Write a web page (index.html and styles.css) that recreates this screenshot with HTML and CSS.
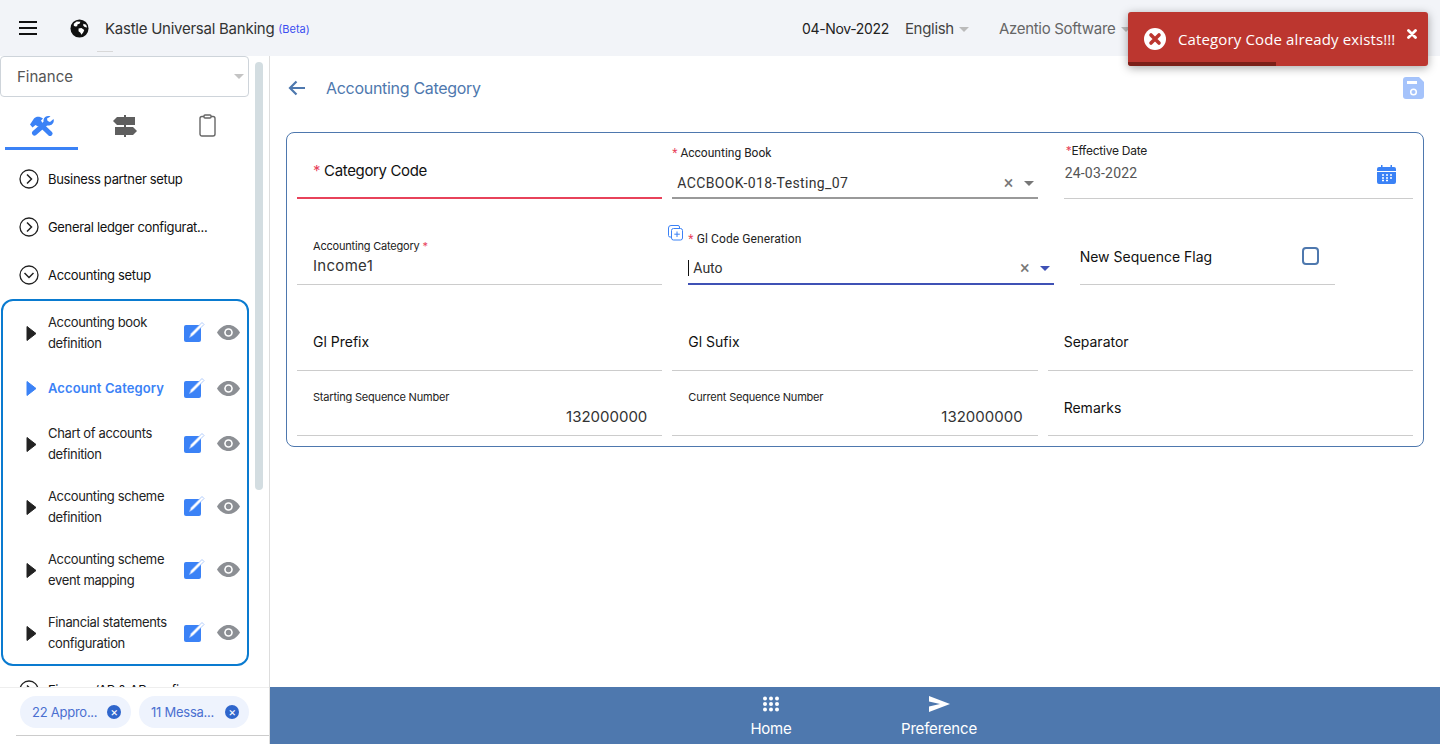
FILE: index.html
```html
<!DOCTYPE html>
<html lang="en">
<head>
  <meta charset="UTF-8" />
  <title>Accounting Category</title>
  <link rel="stylesheet" href="styles.css">
</head>
<body>
  <header class="topbar">
    <svg class="burger" width="18" height="14" viewBox="0 0 18 14"><path d="M0 1h18M0 7h18M0 13h18" stroke="#111" stroke-width="2"/></svg>
    <svg class="globe" width="19" height="19" viewBox="0 0 20 20">
      <circle cx="10" cy="10" r="9.500" fill="#111"/>
      <path d="M4 5l3-2.500 4 .5-1 2-2 .5-.5 2-2 .5-1.500-1zM9 10l3-.5 3 2-1 2.500-2 2.500-1-2-2-1.500zM14 5l3 1 1 3-2.500-.5-1.500-1.500z" fill="#fff"/>
    </svg>
    <span class="app-name">Kastle Universal Banking</span>
    <span class="beta">(Beta)</span>
    <span class="topbar-mark"></span>
    <div class="topbar-right">
      <span class="date">04-Nov-2022</span>
      <span class="lang">English<i class="caret"></i></span>
      <span class="company">Azentio Software<i class="caret"></i></span>
    </div>
  </header>

  <div class="toast">
    <svg class="toast-icon" width="22" height="22" viewBox="0 0 22 22">
      <circle cx="11" cy="11" r="11" fill="#fff"/>
      <path d="M7 7l8 8M15 7l-8 8" stroke="#bc362f" stroke-width="3.600" stroke-linecap="round"/>
    </svg>
    <span class="toast-text">Category Code already exists!!!</span>
    <svg class="toast-close" width="10" height="10" viewBox="0 0 10 10"><path d="M1.500 1.500l7 7M8.500 1.500l-7 7" stroke="#fff" stroke-width="2.800" stroke-linecap="round"/></svg>
    <div class="toast-bar"></div>
  </div>

  <div class="layout">
    <aside class="sidebar">
      <div class="sidebar-top">
        <div class="sidebar-col">
          <div class="module-select">Finance<i class="caret"></i></div>
          <div class="tabs">
            <div class="tab active">
              <svg class="tools" width="24" height="20" viewBox="0 0 24 20">
                <path d="M8 6l12 11.500" stroke="#3b82f6" stroke-width="5" stroke-linecap="round"/>
                <path d="M0 8.500l2.500 3 3-2.500 2.500 1.500 4-4-1-2 2-2C10 .5 6.500 0 4 2.500z" fill="#3b82f6"/>
                <path d="M16 7L4.500 17" stroke="#3b82f6" stroke-width="5" stroke-linecap="round"/>
                <path d="M23.500 3l-3.500 3-2.500-1-.5-2.500L20.500.5c-3-1.200-6.500.2-7 3.500-.2 1.800.5 3.200 1.500 4.200s3.200 1.600 5 1.100c3-.8 4.500-3.500 3.500-6.300z" fill="#3b82f6"/>
              </svg>
            </div>
            <div class="tab">
              <svg width="24" height="22" viewBox="0 0 24 22">
                <rect x="11" y="0" width="2" height="22" fill="#5f5f5f"/>
                <path d="M4 2h18v8H4L0 6z" fill="#5f5f5f"/>
                <path d="M2 12h18l4 4-4 4H2z" fill="#5f5f5f"/>
              </svg>
            </div>
            <div class="tab">
              <svg width="17" height="23" viewBox="0 0 17 23"><rect x="1" y="2.500" width="15" height="19.500" rx="2" fill="none" stroke="#666" stroke-width="1.400"/><rect x="5" y="1" width="7" height="3" rx="1" fill="#fff" stroke="#666" stroke-width="1.400"/></svg>
            </div>
          </div>

          <div class="menu">
            <div class="menu-row">
              <svg class="chev" width="20" height="20" viewBox="0 0 20 20"><circle cx="10" cy="10" r="9" fill="none" stroke="#222" stroke-width="1.300"/><path d="M8 5.500l4.500 4.500L8 14.500" fill="none" stroke="#222" stroke-width="1.500"/></svg>
              Business partner setup
            </div>
            <div class="menu-row">
              <svg class="chev" width="20" height="20" viewBox="0 0 20 20"><circle cx="10" cy="10" r="9" fill="none" stroke="#222" stroke-width="1.300"/><path d="M8 5.500l4.500 4.500L8 14.500" fill="none" stroke="#222" stroke-width="1.500"/></svg>
              General ledger configurat...
            </div>
            <div class="menu-row">
              <svg class="chev" width="20" height="20" viewBox="0 0 20 20"><circle cx="10" cy="10" r="9" fill="none" stroke="#222" stroke-width="1.300"/><path d="M5.500 8l4.500 4.500L14.500 8" fill="none" stroke="#222" stroke-width="1.500"/></svg>
              Accounting setup
            </div>

            <div class="submenu">
              <div class="sub-item">
                <svg class="tri" width="11" height="17" viewBox="0 0 11 17"><path d="M1 1.500L10 8.500 1 15.500z" fill="#222" stroke="#222" stroke-linejoin="round"/></svg>
                <span class="sub-label">Accounting book definition</span>
                <svg class="edit" width="21" height="21" viewBox="0 0 21 21"><rect x="0" y="4" width="17" height="17" rx="2" fill="#3b82f6"/><path d="M5.500 16.500l1.500-4L18 1.500l2 2L9 14.500z" fill="#fff" stroke="#8fb6fa" stroke-width=".7"/></svg>
                <svg class="eye" width="23" height="15" viewBox="0 0 23 15"><path d="M0 7.500C3 2.500 7 0 11.500 0S20 2.500 23 7.500C20 12.500 16 15 11.500 15S3 12.500 0 7.500z" fill="#8c8f94"/><circle cx="11.500" cy="7.500" r="4.300" fill="#fff"/><circle cx="11.500" cy="7.500" r="2.700" fill="#8c8f94"/></svg>
              </div>
              <div class="sub-item single active">
                <svg class="tri" width="11" height="17" viewBox="0 0 11 17"><path d="M1 1.500L10 8.500 1 15.500z" fill="#3b82f6" stroke="#3b82f6" stroke-linejoin="round"/></svg>
                <span class="sub-label">Account Category</span>
                <svg class="edit" width="21" height="21" viewBox="0 0 21 21"><rect x="0" y="4" width="17" height="17" rx="2" fill="#3b82f6"/><path d="M5.500 16.500l1.500-4L18 1.500l2 2L9 14.500z" fill="#fff" stroke="#8fb6fa" stroke-width=".7"/></svg>
                <svg class="eye" width="23" height="15" viewBox="0 0 23 15"><path d="M0 7.500C3 2.500 7 0 11.500 0S20 2.500 23 7.500C20 12.500 16 15 11.500 15S3 12.500 0 7.500z" fill="#8c8f94"/><circle cx="11.500" cy="7.500" r="4.300" fill="#fff"/><circle cx="11.500" cy="7.500" r="2.700" fill="#8c8f94"/></svg>
              </div>
              <div class="sub-item">
                <svg class="tri" width="11" height="17" viewBox="0 0 11 17"><path d="M1 1.500L10 8.500 1 15.500z" fill="#222" stroke="#222" stroke-linejoin="round"/></svg>
                <span class="sub-label">Chart of accounts definition</span>
                <svg class="edit" width="21" height="21" viewBox="0 0 21 21"><rect x="0" y="4" width="17" height="17" rx="2" fill="#3b82f6"/><path d="M5.500 16.500l1.500-4L18 1.500l2 2L9 14.500z" fill="#fff" stroke="#8fb6fa" stroke-width=".7"/></svg>
                <svg class="eye" width="23" height="15" viewBox="0 0 23 15"><path d="M0 7.500C3 2.500 7 0 11.500 0S20 2.500 23 7.500C20 12.500 16 15 11.500 15S3 12.500 0 7.500z" fill="#8c8f94"/><circle cx="11.500" cy="7.500" r="4.300" fill="#fff"/><circle cx="11.500" cy="7.500" r="2.700" fill="#8c8f94"/></svg>
              </div>
              <div class="sub-item">
                <svg class="tri" width="11" height="17" viewBox="0 0 11 17"><path d="M1 1.500L10 8.500 1 15.500z" fill="#222" stroke="#222" stroke-linejoin="round"/></svg>
                <span class="sub-label">Accounting scheme definition</span>
                <svg class="edit" width="21" height="21" viewBox="0 0 21 21"><rect x="0" y="4" width="17" height="17" rx="2" fill="#3b82f6"/><path d="M5.500 16.500l1.500-4L18 1.500l2 2L9 14.500z" fill="#fff" stroke="#8fb6fa" stroke-width=".7"/></svg>
                <svg class="eye" width="23" height="15" viewBox="0 0 23 15"><path d="M0 7.500C3 2.500 7 0 11.500 0S20 2.500 23 7.500C20 12.500 16 15 11.500 15S3 12.500 0 7.500z" fill="#8c8f94"/><circle cx="11.500" cy="7.500" r="4.300" fill="#fff"/><circle cx="11.500" cy="7.500" r="2.700" fill="#8c8f94"/></svg>
              </div>
              <div class="sub-item">
                <svg class="tri" width="11" height="17" viewBox="0 0 11 17"><path d="M1 1.500L10 8.500 1 15.500z" fill="#222" stroke="#222" stroke-linejoin="round"/></svg>
                <span class="sub-label">Accounting scheme event mapping</span>
                <svg class="edit" width="21" height="21" viewBox="0 0 21 21"><rect x="0" y="4" width="17" height="17" rx="2" fill="#3b82f6"/><path d="M5.500 16.500l1.500-4L18 1.500l2 2L9 14.500z" fill="#fff" stroke="#8fb6fa" stroke-width=".7"/></svg>
                <svg class="eye" width="23" height="15" viewBox="0 0 23 15"><path d="M0 7.500C3 2.500 7 0 11.500 0S20 2.500 23 7.500C20 12.500 16 15 11.500 15S3 12.500 0 7.500z" fill="#8c8f94"/><circle cx="11.500" cy="7.500" r="4.300" fill="#fff"/><circle cx="11.500" cy="7.500" r="2.700" fill="#8c8f94"/></svg>
              </div>
              <div class="sub-item">
                <svg class="tri" width="11" height="17" viewBox="0 0 11 17"><path d="M1 1.500L10 8.500 1 15.500z" fill="#222" stroke="#222" stroke-linejoin="round"/></svg>
                <span class="sub-label">Financial statements configuration</span>
                <svg class="edit" width="21" height="21" viewBox="0 0 21 21"><rect x="0" y="4" width="17" height="17" rx="2" fill="#3b82f6"/><path d="M5.500 16.500l1.500-4L18 1.500l2 2L9 14.500z" fill="#fff" stroke="#8fb6fa" stroke-width=".7"/></svg>
                <svg class="eye" width="23" height="15" viewBox="0 0 23 15"><path d="M0 7.500C3 2.500 7 0 11.500 0S20 2.500 23 7.500C20 12.500 16 15 11.500 15S3 12.500 0 7.500z" fill="#8c8f94"/><circle cx="11.500" cy="7.500" r="4.300" fill="#fff"/><circle cx="11.500" cy="7.500" r="2.700" fill="#8c8f94"/></svg>
              </div>
            </div>

            <div class="menu-row">
              <svg class="chev" width="20" height="20" viewBox="0 0 20 20"><circle cx="10" cy="10" r="9" fill="none" stroke="#222" stroke-width="1.300"/><path d="M8 5.500l4.500 4.500L8 14.500" fill="none" stroke="#222" stroke-width="1.500"/></svg>
              Finance/AP &amp; AR confirm
            </div>
          </div>
        </div>
        <div class="scroll-track"><div class="scroll-thumb"></div></div>
      </div>

      <div class="sidebar-bottom">
        <div class="chips">
          <span class="chip chip-one">22 Appro...<i class="chip-x">×</i></span>
          <span class="chip chip-two">11 Messa...<i class="chip-x">×</i></span>
        </div>
      </div>
    </aside>

    <main class="main">
      <div class="content">
        <div class="page-head">
          <svg class="back" width="18" height="16" viewBox="0 0 18 16"><path d="M17 8H2M8.500 1.500L2 8l6.500 6.500" fill="none" stroke="#4e78ae" stroke-width="2.200"/></svg>
          <span class="page-title">Accounting Category</span>
          <svg class="save" width="21" height="22" viewBox="0 0 21 22">
            <path d="M3 0h13l5 5v14a3 3 0 0 1-3 3H3a3 3 0 0 1-3-3V3a3 3 0 0 1 3-3z" fill="#a5c3fb"/>
            <rect x="4" y="4" width="10" height="3" fill="#fff"/>
            <circle cx="10.500" cy="15" r="2.800" fill="none" stroke="#fff" stroke-width="1.500"/>
          </svg>
        </div>

        <div class="form-card">
          <div class="field f-code">
            <div class="big-label"><span class="req">*</span> Category Code</div>
          </div>
          <div class="field f-book">
            <div class="label"><span class="req">*</span> Accounting Book</div>
            <div class="select-value">
              <span>ACCBOOK-018-Testing_07</span>
              <span class="clear">×</span><i class="caret dark"></i>
            </div>
          </div>
          <div class="field f-date">
            <div class="label inter date-label"><span class="req">*</span>Effective Date</div>
            <div class="date-value">
              <span>24-03-2022</span>
              <svg class="calendar" width="19" height="19" viewBox="0 0 19 19">
                <path d="M2 2h2V0h1.500v2h8V0H15v2h2a2 2 0 0 1 2 2v13a2 2 0 0 1-2 2H2a2 2 0 0 1-2-2V4a2 2 0 0 1 2-2z" fill="#3b82f6"/>
                <path d="M0 6.500h19" stroke="#fff"/>
                <path d="M5 10h2M9 10h2M13 10h2M5 13h2M9 13h2M13 13h2M5 15.500h2M9 15.500h2" stroke="#fff" stroke-width="1.300"/>
              </svg>
            </div>
          </div>

          <div class="field f-cat">
            <div class="label inter">Accounting Category <span class="req">*</span></div>
            <div class="value">Income1</div>
          </div>
          <div class="field f-gen">
            <svg class="add-icon" width="15" height="16" viewBox="0 0 15 16">
              <path d="M3 12H2a1.500 1.500 0 0 1-1.500-1.500V3A2.500 2.500 0 0 1 3 .5h7A1.500 1.500 0 0 1 11.500 2v1" fill="none" stroke="#3b82f6"/>
              <rect x="3.500" y="3.500" width="11" height="11.500" rx="2" fill="#fff" stroke="#3b82f6"/>
              <path d="M9 6.500v5.500M6.300 9.200h5.500" stroke="#3b82f6"/>
            </svg>
            <div class="label"><span class="req">*</span> Gl Code Generation</div>
            <div class="select-value">
              <span class="cursor"></span><span>Auto</span>
              <span class="clear">×</span><i class="caret indigo"></i>
            </div>
          </div>
          <div class="field f-flag">
            <span class="big-label small">New Sequence Flag</span>
            <span class="checkbox"></span>
          </div>

          <div class="field f-plain"><div class="big-label small">Gl Prefix</div></div>
          <div class="field f-plain"><div class="big-label small">Gl Sufix</div></div>
          <div class="field f-plain"><div class="big-label small">Separator</div></div>

          <div class="field f-seq">
            <div class="label inter">Starting Sequence Number</div>
            <div class="value right">132000000</div>
          </div>
          <div class="field f-seq">
            <div class="label inter">Current Sequence Number</div>
            <div class="value right">132000000</div>
          </div>
          <div class="field f-remarks"><div class="big-label small">Remarks</div></div>
        </div>
      </div>

      <footer class="footer">
        <div class="foot-item">
          <svg width="18" height="16" viewBox="0 0 18 16" fill="#fff">
            <circle cx="3" cy="2.500" r="2"/><circle cx="9" cy="2.500" r="2"/><circle cx="15" cy="2.500" r="2"/>
            <circle cx="3" cy="8" r="2"/><circle cx="9" cy="8" r="2"/><circle cx="15" cy="8" r="2"/>
            <circle cx="3" cy="13.500" r="2"/><circle cx="9" cy="13.500" r="2"/><circle cx="15" cy="13.500" r="2"/>
          </svg>
          <span>Home</span>
        </div>
        <div class="foot-item">
          <svg width="21" height="16" viewBox="0 0 21 16" fill="#fff"><path d="M0 0l21 8-21 8 0-5.500L11 8 0 5.500z"/></svg>
          <span>Preference</span>
        </div>
      </footer>
    </main>
  </div>
</body>
</html>
```

FILE: styles.css
```css
* {
  box-sizing: border-box;
}
html, body {
  height: 100%;
}
body {
  margin: 0;
  height: 744px;
  overflow: hidden;
  display: flex;
  flex-direction: column;
  position: relative;
  font-family: Inter, "Noto Sans", sans-serif;
  color: #111;
  background: #fff;
}
i {
  font-style: normal;
}

/* top bar */
.topbar {
  height: 56px;
  flex: none;
  display: flex;
  align-items: center;
  background: #f2f4f8;
  padding-left: 19px;
}
.globe {
  margin-left: 33px;
}
.app-name {
  margin-left: 16px;
  font-size: 15px;
  letter-spacing: -0.25px;
  color: #333;
}
.beta {
  margin-left: 4px;
  margin-top: 2px;
  font-size: 11px;
  color: #3b4ff0;
}
.topbar-mark {
  position: absolute;
  left: 97px;
  top: 51px;
  width: 16px;
  height: 1px;
  background: #d8d8d8;
}
.topbar-right {
  position: absolute;
  left: 802px;
  top: 19px;
  display: flex;
  align-items: center;
  line-height: 20px;
  font-size: 15px;
  letter-spacing: -0.3px;
}
.date {
  font-size: 14px;
  letter-spacing: -0.35px;
  color: #222;
}
.lang {
  margin-left: 16px;
  color: #444;
}
.company {
  margin-left: 30px;
  color: #666;
}
.caret {
  display: inline-block;
  width: 0;
  height: 0;
  margin-left: 5px;
  vertical-align: 2px;
  border-left: 5px solid transparent;
  border-right: 5px solid transparent;
  border-top: 5px solid #bbb;
}

/* toast */
.toast {
  position: absolute;
  left: 1128px;
  top: 12px;
  width: 300px;
  height: 54px;
  display: flex;
  align-items: center;
  padding: 0 0 0 16px;
  background: #bc362f;
  border-radius: 3px;
  box-shadow: 0 2px 10px rgba(0, 0, 0, 0.35);
  overflow: hidden;
  color: #fff;
}
.toast-text {
  margin-left: 12px;
  font-family: "Open Sans", sans-serif;
  font-size: 15px;
  letter-spacing: 0.13px;
}
.toast-close {
  position: absolute;
  right: 11px;
  top: 17px;
}
.toast-bar {
  position: absolute;
  left: 0;
  bottom: 0;
  width: 148px;
  height: 4px;
  background: #7b1f18;
}

/* layout */
.layout {
  flex: 1;
  display: flex;
  min-height: 0;
}
.sidebar {
  width: 270px;
  flex: none;
  display: flex;
  flex-direction: column;
  border-right: 1px solid #ddd;
}
.sidebar-top {
  flex: 1;
  min-height: 0;
  display: flex;
  overflow: hidden;
}
.sidebar-col {
  width: 249px;
  flex: none;
}
.scroll-track {
  padding: 6px 0 0 6px;
}
.scroll-thumb {
  width: 8px;
  height: 428px;
  border-radius: 4px;
  background: #d3dde1;
}
.module-select {
  height: 41px;
  display: flex;
  align-items: center;
  justify-content: space-between;
  padding: 0 4px 0 16px;
  border: 1px solid #ced4da;
  border-radius: 4px;
  font-size: 15px;
  color: #555;
}
.module-select .caret {
  border-top-color: #c4c4c4;
}
.tabs {
  display: flex;
  height: 53px;
  padding-left: 5px;
}
.tab {
  width: 73px;
  height: 53px;
  margin-right: 10px;
  padding-top: 4px;
  display: flex;
  align-items: center;
  justify-content: center;
}
.tab.active {
  border-bottom: 3px solid #3b82f6;
}
.tab:last-child {
  margin-right: 0;
}
.tools {
  margin-top: 3px;
}
.menu {
  padding-top: 5px;
}
.menu-row {
  height: 48px;
  display: flex;
  align-items: center;
  padding-left: 19px;
  font-size: 13px;
  letter-spacing: -0.33px;
  color: #111;
  white-space: nowrap;
}
.chev {
  margin-right: 9px;
  flex: none;
}
.submenu {
  border: 2px solid #0a7bd0;
  border-radius: 12px;
  margin-left: 1px;
}
.sub-item {
  height: 63px;
  display: flex;
  align-items: center;
  padding-left: 23px;
}
.sub-item.single {
  height: 48px;
}
.tri {
  flex: none;
  margin-top: 1px;
}
.sub-label {
  width: 136px;
  flex: none;
  margin-left: 11px;
  font-size: 13px;
  line-height: 21px;
  letter-spacing: -0.36px;
  color: #222;
}
.sub-item.active .sub-label {
  color: #3b82f6;
  font-weight: 600;
  letter-spacing: 0.1px;
}
.edit {
  margin-top: -2px;
  flex: none;
}
.eye {
  margin-left: 12px;
  flex: none;
}

/* sidebar bottom chips */
.sidebar-bottom {
  height: 57px;
  flex: none;
  background: #fff;
  border-top: 1px solid #eee;
  padding-left: 16px;
}
.chips {
  height: 48px;
  padding: 8px 0 0 4px;
  display: flex;
  gap: 8px;
  border-bottom: 1px solid #ccc;
}
.chip {
  height: 32px;
  display: flex;
  align-items: center;
  justify-content: space-between;
  padding: 0 10px 0 12px;
  border-radius: 16px;
  background: #eef3fd;
  font-size: 13px;
  letter-spacing: -0.25px;
  color: #4a6fd0;
}
.chip-one {
  width: 111px;
}
.chip-two {
  width: 110px;
}
.chip-x {
  width: 14px;
  height: 14px;
  border-radius: 50%;
  background: #2f66cc;
  color: #fff;
  font-size: 12px;
  line-height: 14px;
  text-align: center;
}

/* main */
.main {
  flex: 1;
  min-width: 0;
  display: flex;
  flex-direction: column;
}
.content {
  flex: 1;
  min-height: 0;
  padding: 0 16px;
}
.page-head {
  height: 76px;
  display: flex;
  align-items: center;
  padding: 0 0 12px 2px;
}
.page-title {
  margin-left: 20px;
  font-size: 16px;
  letter-spacing: -0.3px;
  color: #4e78ae;
}
.save {
  margin-left: auto;
}
.form-card {
  display: grid;
  grid-template-columns: repeat(3, 1fr);
  grid-template-rows: 66px 86px 86px 65px;
  column-gap: 10px;
  padding: 0 10px 10px;
  border: 1px solid #4e78ae;
  border-radius: 8px;
}
.field {
  position: relative;
  border-bottom: 1px solid #ccc;
}
.label {
  font-family: Roboto, sans-serif;
  font-size: 12px;
  line-height: 16px;
  color: #222;
}
.label.inter {
  font-family: Inter, sans-serif;
  font-size: 11px;
  letter-spacing: -0.2px;
}
.label.date-label {
  font-size: 12px;
  letter-spacing: -0.25px;
}
.req {
  color: #e8425a;
}
.big-label {
  font-size: 15px;
  line-height: 20px;
  letter-spacing: -0.35px;
  color: #111;
}
.big-label.small {
  font-size: 14px;
  letter-spacing: 0;
}
.value {
  font-size: 15px;
  line-height: 20px;
  color: #333;
}
.value.right {
  text-align: right;
  padding-right: 15px;
  margin-top: 1px;
}
.select-value {
  display: flex;
  align-items: center;
  font-family: Roboto, sans-serif;
  font-size: 14px;
  line-height: 20px;
  color: #333;
}
.clear {
  margin-left: auto;
  font-size: 18px;
  color: #777;
}
.select-value .caret {
  margin: 1px 4px 0 10px;
}
.caret.dark {
  border-top-color: #777;
}
.caret.indigo {
  border-top-color: #3f51b5;
}
.cursor {
  width: 1px;
  height: 16px;
  margin-right: 4px;
  background: #111;
}
.f-code {
  padding: 28px 0 0 16px;
  border-bottom: 2px solid #e8425a;
}
.f-book {
  padding-top: 12px;
  border-bottom: 2px solid #999;
}
.f-book .select-value {
  margin-top: 12px;
  padding: 0 0 0 5px;
  letter-spacing: 0.36px;
}
.f-date {
  margin-left: 16px;
  padding-top: 10px;
}
.date-label {
  padding-left: 2px;
}
.date-value {
  display: flex;
  align-items: flex-start;
  justify-content: space-between;
  margin-top: 4px;
  padding: 0 17px 0 1px;
  font-family: Roboto, sans-serif;
  font-size: 14px;
  line-height: 20px;
  letter-spacing: 0.2px;
  color: #555;
}
.calendar {
  margin-top: 2px;
}
.f-cat {
  padding: 39px 0 0 16px;
}
.f-cat .value {
  margin-top: 2px;
  letter-spacing: 0.3px;
}
.f-gen {
  margin: 0 -16px 0 16px;
  padding-top: 32px;
  border-bottom: 2px solid #3f51b5;
}
.f-gen .label {
  letter-spacing: 0.1px;
}
.f-gen .select-value {
  margin-top: 11px;
}
.add-icon {
  position: absolute;
  left: -20px;
  top: 26px;
}
.f-flag {
  margin-left: 32px;
  width: 255px;
  padding: 48px 16px 0 0;
  display: flex;
  justify-content: space-between;
  align-items: flex-start;
}
.checkbox {
  width: 17px;
  height: 18px;
  border: 2px solid #4e78ae;
  border-radius: 4px;
}
.f-plain {
  padding: 47px 0 0 16px;
}
.f-seq {
  padding: 18px 0 0 16px;
}
.f-seq .value.right {
  margin-top: 2px;
}
.f-remarks {
  padding: 27px 0 0 16px;
}

/* bottom bar */
.footer {
  height: 57px;
  flex: none;
  display: flex;
  background: #4e78ae;
  color: #fff;
  font-size: 15px;
  letter-spacing: -0.2px;
  padding-left: 451px;
}
.foot-item {
  width: 100px;
  display: flex;
  flex-direction: column;
  align-items: center;
  padding-top: 9px;
  gap: 8px;
  line-height: 17px;
  margin-right: 68px;
}
```
